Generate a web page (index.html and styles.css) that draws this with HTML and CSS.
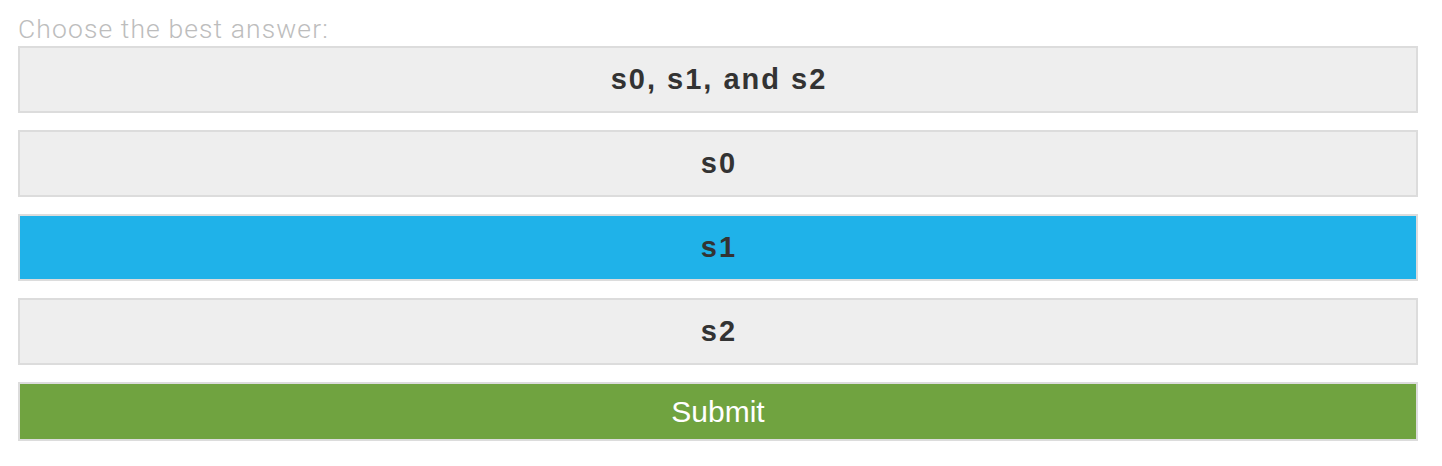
FILE: index.html
```html
<!DOCTYPE html>
<html>
<head>
<meta charset="utf-8">
<link rel="stylesheet" href="styles.css">
</head>
<body>
<div class="quiz">
  <div class="prompt">Choose the best answer:</div>
  <div class="choices">
    <button class="choice">s0, s1, and s2</button>
    <button class="choice">s0</button>
    <button class="choice selected">s1</button>
    <button class="choice">s2</button>
    <button class="submit">Submit</button>
  </div>
</div>
</body>
</html>
```
FILE: styles.css
```css
html, body {
  margin: 0;
  padding: 0;
  background: #ffffff;
}
.quiz {
  padding: 12px 24px 0 18px;
  font-family: "Liberation Sans", Arial, sans-serif;
}
.prompt {
  color: #bdbdbd;
  font-family: Roboto, "Liberation Sans", Arial, sans-serif;
  font-weight: 300;
  font-size: 26.5px;
  letter-spacing: 1.1px;
  line-height: 34px;
  height: 34px;
}
.choices {
  display: flex;
  flex-direction: column;
  gap: 17px;
}
.choice, .submit {
  display: block;
  width: 1400px;
  box-sizing: border-box;
  border: 2px solid #dcdcdc;
  margin: 0;
  padding: 0;
  font-family: "Liberation Sans", Arial, sans-serif;
  text-align: center;
}
.choice {
  height: 67px;
  background: #eeeeee;
  color: #333333;
  font-weight: bold;
  font-size: 29px;
  letter-spacing: 2px;
  text-indent: 2px;
}
.choice.selected {
  background: #1fb2e9;
}
.submit {
  height: 59px;
  background: #70a340;
  color: #ffffff;
  font-size: 30px;
}
```
